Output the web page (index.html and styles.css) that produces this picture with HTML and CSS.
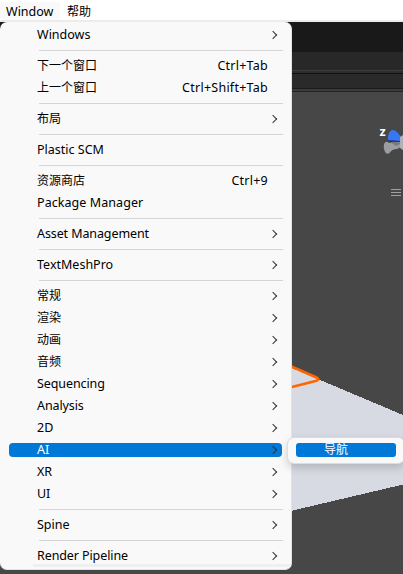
FILE: index.html
```
<!DOCTYPE html>
<html lang="zh-CN">
<head>
<meta charset="utf-8">
<title>Window</title>
<link rel="stylesheet" href="styles.css">
</head>
<body>
<div class="app">
<svg class="scene" width="403" height="552" viewBox="0 22 403 552">
  <rect y="22" width="403" height="30" fill="#191919"/>
  <rect y="52" width="403" height="18" fill="#282828"/>
  <rect y="70" width="403" height="1" fill="#3c3c3c"/>
  <rect y="71" width="403" height="2" fill="#2c2c2c"/>
  <rect y="73" width="403" height="1" fill="#111"/>
  <rect y="74" width="403" height="14" fill="#2a2a2a"/>
  <rect y="88" width="403" height="1" fill="#1c1c1c"/>
  <rect y="89" width="403" height="2" fill="#3c3c3c"/>
  <rect y="91" width="403" height="1" fill="#232323"/>
  <rect y="92" width="403" height="482" fill="#474747"/>
  <path d="M280 363L319 379.500L403 415V484.500L280 513.500Z" fill="#d7dae2" shape-rendering="crispEdges"/>
  <path d="M280 361.500L316.500 377.500Q320 379.500 316.500 380.800L280 390" fill="none" stroke="#ff6600" stroke-width="2.600"/>
  <text class="axis" x="379.500" y="135.500">z</text>
  <path d="M384 144Q386 140 389 143L403 141.500V146L397 149Q392 149 389.500 153Q387 155 385 152Q383 148 384 144Z" fill="#9c9da1"/>
  <path d="M390 142L403 142.500L396 146Z" fill="#77797d"/>
  <path d="M388 140Q387.500 133 391 130.500Q394 129 397.500 132.500L401 137V141.500Z" fill="#3778f2"/>
  <path d="M388 140L400.500 141V142H389Z" fill="#173d91"/>
  <path d="M400 137L403 135V150L400 148Z" fill="#aeb1b8"/>
  <path d="M391 189.500h10M391 192.500h10M391 195.500h10" stroke="#a0a0a0"/>
</svg>
<nav class="menubar"><span class="tab open">Window</span><span class="tab help">帮助</span></nav>
<ul class="menu">
  <li class="item sub">Windows</li>
  <li class="sep"></li>
  <li class="item"><span class="zh">下一个窗口</span><kbd>Ctrl+Tab</kbd></li>
  <li class="item"><span class="zh">上一个窗口</span><kbd>Ctrl+Shift+Tab</kbd></li>
  <li class="sep"></li>
  <li class="item sub zh">布局</li>
  <li class="sep"></li>
  <li class="item">Plastic SCM</li>
  <li class="sep"></li>
  <li class="item"><span class="zh">资源商店</span><kbd>Ctrl+9</kbd></li>
  <li class="item wide">Package Manager</li>
  <li class="sep"></li>
  <li class="item sub tight">Asset Management</li>
  <li class="sep"></li>
  <li class="item sub">TextMeshPro</li>
  <li class="sep"></li>
  <li class="item sub zh">常规</li>
  <li class="item sub zh">渲染</li>
  <li class="item sub zh">动画</li>
  <li class="item sub zh">音频</li>
  <li class="item sub tight">Sequencing</li>
  <li class="item sub tight">Analysis</li>
  <li class="item sub">2D</li>
  <li class="item sub active">AI</li>
  <li class="item sub">XR</li>
  <li class="item sub tight">UI</li>
  <li class="sep"></li>
  <li class="item sub">Spine</li>
  <li class="sep"></li>
  <li class="item sub last tight">Render Pipeline</li>
</ul>
<div class="submenu"><div class="choice">导航</div></div>
</div>
</body>
</html>
```
FILE: styles.css
```
* { box-sizing: border-box; }
body {
  margin: 0;
  font: 12.5px "Noto Sans", "Noto Sans CJK SC", sans-serif;
  color: #000;
  background: #474747;
}
.app { position: relative; width: 403px; height: 574px; overflow: hidden; }
.scene { position: absolute; left: 0; top: 22px; }
.axis { font: bold 12.5px "Noto Sans", sans-serif; fill: #fff; }
.menubar {
  position: relative;
  display: flex;
  height: 22px;
  padding-top: 2px;
  background: #fff;
  border-bottom: 2px solid #ececec;
}
.tab { height: 18px; line-height: 20px; padding: 0 7px 0 6px; }
.open { width: 60px; background: #f9f9f9; border-radius: 3px; }
.help { font-size: 12px; padding-left: 7px; }
.menu {
  position: relative;
  width: 292px;
  height: 548px;
  margin: 0;
  padding: 2px 0 0;
  list-style: none;
  background: #f9f9f9;
  border-right: 1px solid #e2e2e2;
  border-bottom: 1px solid #e2e2e2;
  border-radius: 7px;
}
.item {
  position: relative;
  display: flex;
  justify-content: space-between;
  height: 22px;
  padding: 0 23px 0 37px;
  line-height: 22px;
  white-space: nowrap;
}
.item kbd { font: inherit; letter-spacing: .25px; }
.zh { font-size: 12px; }
.wide { letter-spacing: .07px; }
.tight { letter-spacing: -.1px; }
.sep { height: 9px; padding: 4px 8px 4px 39px; }
.sep::before { content: ""; display: block; height: 1px; background: #d5d5d5; }
.sub::after {
  content: "";
  width: 5px;
  height: 5px;
  margin: 8px -8px 0 0;
  border: solid #333;
  border-width: 1.5px 1.5px 0 0;
  transform: rotate(45deg);
}
.active { z-index: 0; color: #fff; }
.active::before {
  content: "";
  position: absolute;
  z-index: -1;
  inset: 4px 9px 4px 9px;
  border-radius: 4px;
  background: #0078d7;
}
.last { background: linear-gradient(#efefef, #efefef) 33px 19px / 258px 3px no-repeat; }
.submenu {
  position: absolute;
  left: 287px;
  top: 437px;
  width: 118px;
  height: 27px;
  padding: 5px 8px 6px;
  background: #f9f9f9;
  border: 1px solid #ddd;
  border-radius: 7px;
  box-shadow: 0 4px 9px rgba(0, 0, 0, .17);
}
.choice {
  height: 14px;
  padding-left: 28px;
  font-size: 12px;
  line-height: 14px;
  color: #fff;
  background: #0078d7;
  border-radius: 3px;
}
```
